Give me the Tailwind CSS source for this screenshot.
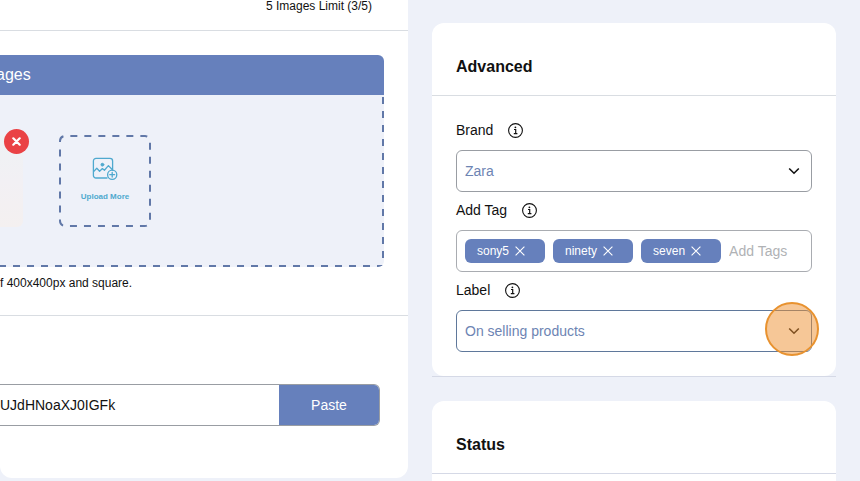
<!DOCTYPE html>
<html lang="en">
<head>
    <meta charset="UTF-8">
    <meta name="viewport" content="width=device-width, initial-scale=1.0">
    <title>Edit Product</title>
    <script src="https://cdn.jsdelivr.net/npm/@tailwindcss/browser@4"></script>
</head>
<body class="bg-[#eef1f9] font-['Liberation_Sans',Arial,sans-serif] text-[#111111]">
    <main class="h-screen overflow-hidden grid grid-cols-[408fr_404fr] gap-6 pr-6">
        <!-- Media column -->
        <div class="min-w-0">
            <section class="bg-white rounded-b-xl">
                <div class="h-[31px] pr-9 border-b border-[#d9dde2] text-right">
                    <p class="text-xs leading-3">5 Images Limit (3/5)</p>
                </div>

                <!-- Image gallery -->
                <div class="pt-6 pr-6">
                    <h3 class="h-10 flex items-center bg-[#6680bc] text-white text-base rounded-tr-md"><span class="-ml-1">ages</span></h3>
                    <div class="relative h-[172px] pt-10 flex items-start bg-[#eef1f9] rounded-br-md overflow-hidden">
                        <svg class="absolute inset-0 w-full h-full pointer-events-none" stroke="#6178a8" stroke-width="4" stroke-dasharray="7 7" aria-hidden="true">
                            <line x1="100%" y1="0" x2="100%" y2="100%" stroke-dashoffset="12" />
                            <line x1="0" y1="100%" x2="100%" y2="100%" stroke-dashoffset="1" />
                        </svg>
                        <div class="relative w-[23px] h-[92px] mr-9 rounded-br-md bg-linear-to-b from-[#eef2f4] via-[#f2f0f4] to-[#f4f0f0]">
                            <button type="button" aria-label="Remove image" class="absolute -right-1.5 -top-1.5 size-[25px] rounded-full bg-[#ea4245] text-white flex items-center justify-center">
                                <svg class="size-[9px]" viewBox="0 0 9 9" fill="none" stroke="currentColor" stroke-width="2.2" stroke-linecap="round">
                                    <path d="M1.3 1.3 7.7 7.7M7.7 1.3 1.3 7.7" />
                                </svg>
                            </button>
                        </div>
                        <button type="button" class="relative size-[92px] flex flex-col items-center pt-[22px] text-[#4fa9cf]">
                            <svg class="absolute inset-0 size-full" viewBox="0 0 92 92" fill="none" stroke="#6178a8" stroke-width="2" stroke-dasharray="7 7" aria-hidden="true">
                                <path d="M1 8V6A5 5 0 0 1 6 1H86A5 5 0 0 1 91 6V86A5 5 0 0 1 86 91H6A5 5 0 0 1 1 86V8" stroke-dashoffset="-1" />
                            </svg>
                            <svg class="w-[26px] h-6" viewBox="0 0 26 24" fill="none" stroke="currentColor" stroke-width="1.3" stroke-linecap="round" stroke-linejoin="round">
                                <path d="M15 21H4a2.6 2.6 0 0 1-2.6-2.6V4A2.6 2.6 0 0 1 4 1.4h14A2.6 2.6 0 0 1 20.6 4v9" />
                                <path d="M1.6 14.6 4.8 11.2 7.6 14.2 10.4 11.6 12.4 13.2 16.4 8.6 20.4 12.8" />
                                <circle cx="10.4" cy="7.7" r="1.4" fill="currentColor" stroke-width="1" />
                                <circle cx="20.2" cy="17.7" r="4.6" />
                                <path d="M20.2 15.3v4.8M17.8 17.7h4.8" />
                            </svg>
                            <span class="mt-2 text-[8px] leading-4 font-bold">Upload More</span>
                        </button>
                    </div>
                    <p class="mt-2 mb-6 text-xs leading-4">f 400x400px and square.</p>
                </div>

                <!-- Video link -->
                <div class="border-t border-[#d9dde2] pt-17 pr-7 pb-13">
                    <div class="flex h-[42px] border border-l-0 border-[#999da3] rounded-r-md overflow-hidden">
                        <input type="text" aria-label="Video link" value="UJdHNoaXJ0IGFk" class="flex-1 min-w-0 text-sm focus:outline-none">
                        <button type="button" class="w-[100px] bg-[#6680bc] hover:bg-[#5872ae] text-white text-sm">Paste</button>
                    </div>
                </div>
            </section>
        </div>

        <!-- Settings column -->
        <div class="min-w-0 pt-[23px] flex flex-col gap-6">
            <section class="border-b border-[#d5d9e6]">
                <div class="bg-white rounded-xl">
                    <h2 class="pt-8 pb-4 px-6 border-b border-[#d9dde2] text-base leading-6 font-bold">Advanced</h2>
                    <div class="px-6 pt-4 pb-6">
                        <div class="h-9 mb-0.5 flex items-center gap-[15px] text-sm">
                            <label for="brand">Brand</label>
                            <svg class="size-[15px]" viewBox="0 0 15 15" fill="none" stroke="currentColor" aria-hidden="true">
                                <circle cx="7.5" cy="7.5" r="6.9" stroke-width="1.1" />
                                <path d="M6 6.5h1.7v4M5.8 10.6h3.6" stroke-width="1.2" />
                                <circle cx="7.4" cy="4.3" r=".9" fill="currentColor" stroke="none" />
                            </svg>
                        </div>
                        <div class="relative">
                            <select id="brand" class="block appearance-none w-full h-[42px] pl-2 pr-8 border border-[#999da3] rounded-md bg-white text-sm text-[#6d84b3] focus:outline-none">
                                <option>Zara</option>
                            </select>
                            <svg class="absolute right-3 top-[17px] w-3 h-2 pointer-events-none" viewBox="0 0 12 8" fill="none" stroke="#111111" stroke-width="1.6" aria-hidden="true">
                                <path d="M1.2 1.5 6 6.2 10.8 1.5" />
                            </svg>
                        </div>

                        <div class="h-9 mb-0.5 flex items-center gap-[15px] text-sm">
                            <label for="tags">Add Tag</label>
                            <svg class="size-[15px]" viewBox="0 0 15 15" fill="none" stroke="currentColor" aria-hidden="true">
                                <circle cx="7.5" cy="7.5" r="6.9" stroke-width="1.1" />
                                <path d="M6 6.5h1.7v4M5.8 10.6h3.6" stroke-width="1.2" />
                                <circle cx="7.4" cy="4.3" r=".9" fill="currentColor" stroke="none" />
                            </svg>
                        </div>
                        <div class="h-[42px] px-2 flex items-center gap-2 border border-[#a9acb1] rounded-md">
                            <span class="h-6 pl-3 pr-5 flex items-center gap-1.5 rounded-md bg-[#6680bc] text-white text-xs">
                                sony5
                                <button type="button" aria-label="Remove sony5">
                                    <svg class="size-2.5" viewBox="0 0 10 10" fill="none" stroke="currentColor" stroke-width="1.1"><path d="M.6.6 9.4 9.4M9.4.6.6 9.4" /></svg>
                                </button>
                            </span>
                            <span class="h-6 pl-3 pr-5 flex items-center gap-1.5 rounded-md bg-[#6680bc] text-white text-xs">
                                ninety
                                <button type="button" aria-label="Remove ninety">
                                    <svg class="size-2.5" viewBox="0 0 10 10" fill="none" stroke="currentColor" stroke-width="1.1"><path d="M.6.6 9.4 9.4M9.4.6.6 9.4" /></svg>
                                </button>
                            </span>
                            <span class="h-6 pl-3 pr-5 flex items-center gap-1.5 rounded-md bg-[#6680bc] text-white text-xs">
                                seven
                                <button type="button" aria-label="Remove seven">
                                    <svg class="size-2.5" viewBox="0 0 10 10" fill="none" stroke="currentColor" stroke-width="1.1"><path d="M.6.6 9.4 9.4M9.4.6.6 9.4" /></svg>
                                </button>
                            </span>
                            <input id="tags" type="text" placeholder="Add Tags" class="flex-1 min-w-0 text-sm placeholder:text-[#b0b2b5] focus:outline-none">
                        </div>

                        <div class="h-9 mb-0.5 flex items-center gap-[15px] text-sm">
                            <label for="label">Label</label>
                            <svg class="size-[15px]" viewBox="0 0 15 15" fill="none" stroke="currentColor" aria-hidden="true">
                                <circle cx="7.5" cy="7.5" r="6.9" stroke-width="1.1" />
                                <path d="M6 6.5h1.7v4M5.8 10.6h3.6" stroke-width="1.2" />
                                <circle cx="7.4" cy="4.3" r=".9" fill="currentColor" stroke="none" />
                            </svg>
                        </div>
                        <div class="relative">
                            <select id="label" class="block appearance-none w-full h-[42px] pl-2 pr-8 border border-[#5f789b] rounded-md bg-white text-sm text-[#6d84b3] focus:outline-none">
                                <option>On selling products</option>
                            </select>
                            <svg class="absolute right-3 top-[17px] w-3 h-2 pointer-events-none" viewBox="0 0 12 8" fill="none" stroke="#111111" stroke-width="1.6" aria-hidden="true">
                                <path d="M1.2 1.5 6 6.2 10.8 1.5" />
                            </svg>
                            <!-- Click highlight -->
                            <span class="absolute -right-[7px] -top-2 size-[54px] rounded-full border-2 border-[#e8922f] bg-[#ee8f30]/50 pointer-events-none"></span>
                        </div>
                    </div>
                </div>
            </section>

            <section class="flex-1 bg-white rounded-t-xl">
                <h2 class="pt-8 pb-4 px-6 border-b border-[#d5d9e6] text-base leading-6 font-bold">Status</h2>
            </section>
        </div>
    </main>
</body>
</html>
